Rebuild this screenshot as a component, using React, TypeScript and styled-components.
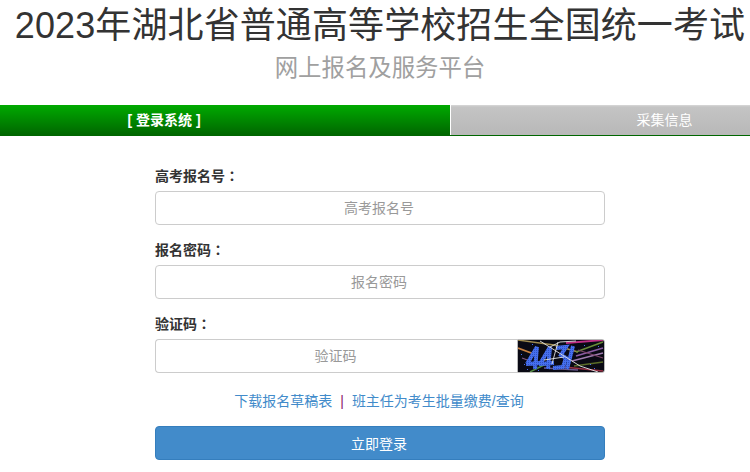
import styled, { createGlobalStyle } from "styled-components";

const CJK = `"Liberation Sans", "Noto Sans CJK SC", sans-serif`;

const GlobalStyle = createGlobalStyle`
  html, body {
    margin: 0;
    padding: 0;
    background: #fff;
    overflow: hidden;
  }
  * { box-sizing: border-box; }
`;

const Page = styled.div`
  width: 750px;
  height: 472px;
  font-family: ${CJK};
  overflow: hidden;
`;

const Title = styled.h1`
  margin: 0;
  height: 60px;
  padding-left: 10px;
  font-size: 36px;
  line-height: 52px;
  font-weight: 400;
  letter-spacing: 0.1px;
  color: #333;
  text-align: center;
  white-space: nowrap;
`;

const Subtitle = styled.h2`
  margin: 0;
  height: 45px;
  padding-left: 10px;
  font-size: 23.4px;
  line-height: 16px;
  font-weight: 400;
  color: #a0a0a0;
  text-align: center;
`;

const Steps = styled.div`
  display: flex;
  height: 31px;
  background: #006600;
`;

const Step = styled.div<{ $active?: boolean }>`
  height: 30px;
  line-height: 30px;
  text-align: center;
  font-size: 14px;
  color: #fff;
  font-weight: ${(p) => (p.$active ? 700 : 400)};
  width: ${(p) => (p.$active ? "450px" : "300px")};
  padding: ${(p) => (p.$active ? "0 122px 0 0" : "0 0 0 128px")};
  background: ${(p) =>
    p.$active
      ? "linear-gradient(#00aa00, #006600)"
      : "linear-gradient(#d8d8d8 0, #c4c4c4 2px, #b8b8b8)"};
  border-left: ${(p) => (p.$active ? "none" : "1px solid #fff")};
`;

const Form = styled.form`
  width: 450px;
  margin: 30px 0 0 155px;
  display: flex;
  flex-direction: column;
`;

const Label = styled.label`
  display: block;
  height: 25px;
  font-size: 14px;
  line-height: 18px;
  font-weight: 700;
  color: #333;
`;

const Colon = styled.span`
  font-family: "Noto Sans CJK TC", sans-serif;
`;

const Field = styled.div`
  margin-bottom: 15px;
`;

const Input = styled.input`
  display: block;
  width: 100%;
  height: 34px;
  padding: 1px 4px 1px 2px;
  border: 1px solid #ccc;
  border-radius: 4px;
  font-family: inherit;
  font-size: 14px;
  text-align: center;
  background: #fff;
  &::placeholder { color: #999; opacity: 1; }
`;

const CodeRow = styled.div`
  display: flex;
  align-items: stretch;
`;

const CodeInput = styled(Input)`
  flex: 1;
  width: auto;
  min-width: 0;
  border-radius: 4px 0 0 4px;
  border-right: none;
`;

const Captcha = styled.svg`
  display: block;
  width: 88px;
  height: 34px;
  flex: none;
  border: 1px solid #b8b8b8;
  border-radius: 0 3px 3px 0;
`;

const Links = styled.div`
  height: 37px;
  margin-top: 1px;
  padding-right: 2px;
  display: flex;
  justify-content: center;
  align-items: flex-start;
  font-size: 14px;
  line-height: 24px;
  color: #428bca;
`;

const Divider = styled.span`
  margin: 0 8px;
  color: #8b1a6b;
`;

const SubmitButton = styled.button`
  height: 34px;
  padding: 0 2px 0 0;
  border: 1px solid #357ebd;
  border-radius: 4px;
  background: #428bca;
  color: #fff;
  font-family: inherit;
  font-size: 14px;
`;

// captcha noise lines, in the image's own 86x32 coordinates
const noise = [
  ["M0 0 L36 5 L60 12", "#a08c50", 1.4],
  ["M48 3 L85 0", "#c02e84", 1.8],
  ["M0 8 L16 14", "#c88040", 1.8],
  ["M58 12 L85 2", "#6a8c38", 1.4],
  ["M58 16 L85 8", "#8a5ca4", 1.6],
  ["M54 21 L85 13", "#a07cb0", 1.4],
  ["M56 26 L85 22", "#5a6c28", 1.4],
  ["M46 27 L85 31", "#983044", 1.6],
  ["M12 32 L30 23", "#548c44", 1.4],
  ["M26 28 L60 30", "#6a5890", 1.4],
  ["M4 18 L12 21", "#845884", 1.2],
  ["M60 10 L85 18", "#7c4468", 1.2],
];

const sparks = [
  "M22 1 L62 26 L80 32",
  "M32 7 L42 2 L58 1",
  "M40 2 L34 24",
  "M26 20 L46 17",
];

const specks: [number, number][] = [
  [6, 24], [9, 29], [3, 14], [14, 4], [72, 24], [80, 6], [66, 5], [20, 30], [76, 28],
];

export default function App() {
  return (
    <Page>
      <GlobalStyle />
      <Title>2023年湖北省普通高等学校招生全国统一考试</Title>
      <Subtitle>网上报名及服务平台</Subtitle>
      <Steps>
        <Step $active>[ 登录系统 ]</Step>
        <Step>采集信息</Step>
      </Steps>
      <Form>
        <Field>
          <Label>高考报名号<Colon>：</Colon></Label>
          <Input placeholder="高考报名号" />
        </Field>
        <Field>
          <Label>报名密码<Colon>：</Colon></Label>
          <Input placeholder="报名密码" />
        </Field>
        <Field>
          <Label>验证码<Colon>：</Colon></Label>
          <CodeRow>
            <CodeInput placeholder="验证码" />
            <Captcha viewBox="0 0 86 32" preserveAspectRatio="none">
              <defs>
                <pattern id="dither" width="2" height="2" patternUnits="userSpaceOnUse">
                  <rect width="2" height="2" fill="#4670ee" />
                  <rect width="1" height="1" fill="#3050c4" />
                </pattern>
              </defs>
              <rect width="86" height="32" fill="#0a0a14" />
              {noise.map(([d, c, w]) => (
                <path key={d as string} d={d as string} stroke={c as string} strokeWidth={w} fill="none" />
              ))}
              <g stroke="url(#dither)" strokeWidth="4" fill="none">
                <path d="M9 24 L19 7 L17 29 M8 24 L23 23" />
                <path d="M22 24 L32 7 L30 29 M21 24 L36 23" />
                <path d="M38 8 L48 7 L43 15 L48 18 L45 27 L35 28" />
                <path d="M55 6 L49 29" />
              </g>
              {sparks.map((d) => (
                <path key={d} d={d} stroke="#e4e4e4" strokeWidth="0.9" fill="none" />
              ))}
              {specks.map(([x, y]) => (
                <rect key={`${x}-${y}`} x={x} y={y} width="1" height="1" fill="#4670ee" />
              ))}
            </Captcha>
          </CodeRow>
        </Field>
        <Links>
          <span>下载报名草稿表</span>
          <Divider>|</Divider>
          <span>班主任为考生批量缴费/查询</span>
        </Links>
        <SubmitButton type="button">立即登录</SubmitButton>
      </Form>
    </Page>
  );
}
